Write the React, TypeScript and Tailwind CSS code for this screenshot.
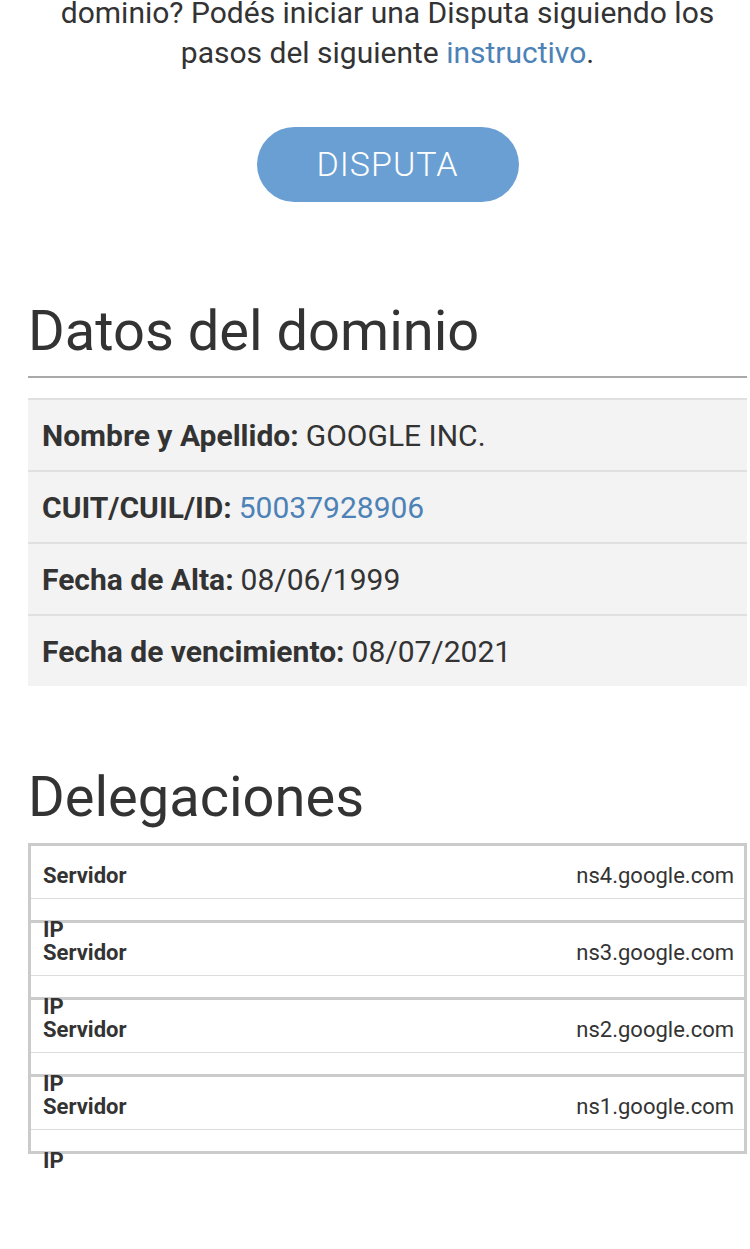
import React from 'react';

const datos = [
  { label: 'Nombre y Apellido:', value: 'GOOGLE INC.', link: false },
  { label: 'CUIT/CUIL/ID:', value: '50037928906', link: true },
  { label: 'Fecha de Alta:', value: '08/06/1999', link: false },
  { label: 'Fecha de vencimiento:', value: '08/07/2021', link: false },
];

const servidores = ['ns4.google.com', 'ns3.google.com', 'ns2.google.com', 'ns1.google.com'];

export default function App() {
  return (
    <div className="min-h-[1249px] bg-white text-[#333333] font-['Roboto',sans-serif] overflow-hidden">
      <div className="pl-[28px] pr-[3px]">
        {/* intro text */}
        <p className="mt-[-7px] text-center text-[30px] leading-[40px]">
          <span className="block whitespace-nowrap">dominio? Podés iniciar una Disputa siguiendo los</span>
          <span className="block whitespace-nowrap">
            pasos del siguiente <a className="text-[#4d82b6]">instructivo</a>.
          </span>
        </p>

        <div className="mt-[54px] flex justify-center">
          <button className="w-[262px] h-[75px] rounded-full bg-[#6a9fd3] text-white text-[34px] font-light tracking-[1px] font-['Roboto',sans-serif]">
            DISPUTA
          </button>
        </div>

        {/* Datos del dominio */}
        <h2 className="mt-[101px] text-[56px] leading-[56px] font-normal">Datos del dominio</h2>
        <div className="mt-[17px] border-t-2 border-[#a9a9a9]" />
        <div className="mt-[20px] bg-[#f3f3f3]">
          {datos.map((d) => (
            <div key={d.label} className="h-[72px] border-t-2 border-[#e0e0e0] flex items-center pl-[14px] text-[30px]">
              <span className="font-bold">{d.label}</span>
              <span className={d.link ? 'ml-[7px] text-[#4d82b6]' : 'ml-[7px]'}>{d.value}</span>
            </div>
          ))}
        </div>

        {/* Delegaciones */}
        <h2 className="mt-[83px] text-[56px] leading-[56px] font-normal">Delegaciones</h2>
        <div className="mt-[18px] border-[3px] border-[#cbcbcb]">
          {servidores.map((ns, i) => (
            <div key={ns} className={i > 0 ? 'border-t-[3px] border-[#cbcbcb]' : ''}>
              <div className="h-[53px] border-b border-[#dcdcdc] flex justify-between pl-[12px] pr-[10px] pt-[19px] text-[22px] leading-[22px]">
                <span className="font-bold">Servidor</span>
                <span>{ns}</span>
              </div>
              <div className="h-[21px] pl-[12px] pt-[20px] text-[22px] leading-[22px] font-bold">IP</div>
            </div>
          ))}
        </div>
      </div>
    </div>
  );
}
